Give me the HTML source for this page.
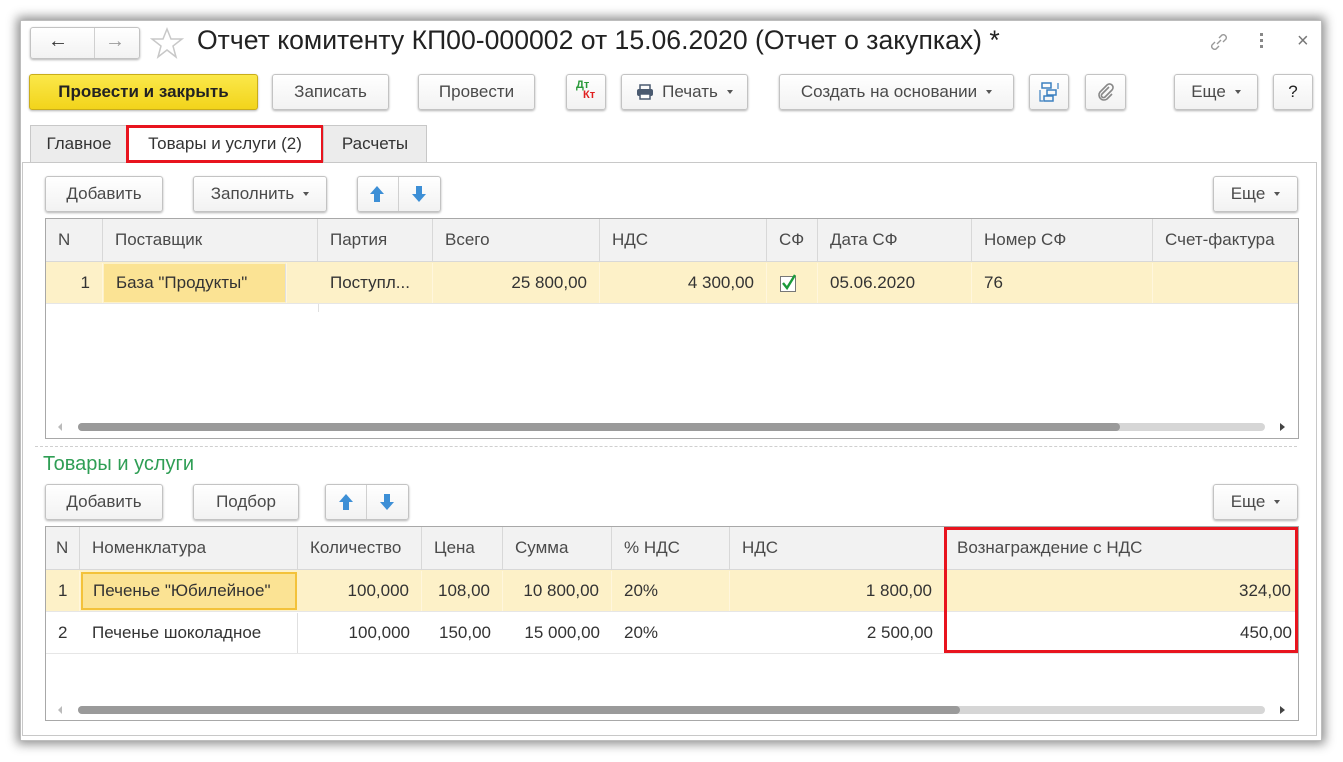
<!DOCTYPE html>
<html><head><meta charset="utf-8"><style>
*{box-sizing:border-box;margin:0;padding:0}
body{width:1343px;height:762px;background:#fff;position:relative;overflow:hidden;font-family:"Liberation Sans",Arial,sans-serif;color:#404040;font-size:17px}
.a{position:absolute}
.win{left:20px;top:20px;width:1302px;height:721px;background:#fff;border:1px solid #bdbdbd;box-shadow:0 0 10px 3px rgba(0,0,0,.45)}
.btn{position:absolute;height:36px;border:1px solid #c3c3c3;border-radius:3px;background:linear-gradient(#fff,#f2f2f2);box-shadow:0 1px 2px rgba(0,0,0,.3);display:flex;align-items:center;justify-content:center;color:#4a4a4a;font-size:17px;white-space:nowrap}
.dd:after{content:"";display:inline-block;margin-left:9px;border-left:3.5px solid transparent;border-right:3.5px solid transparent;border-top:4px solid #555;vertical-align:middle}
.tab{position:absolute;top:125px;height:38px;background:#ececec;border:1px solid #c8c8c8;display:flex;align-items:center;justify-content:center;color:#333}
.tbl{position:absolute;border:1px solid #a8a8a8;background:#fff}
.c{position:absolute;display:flex;align-items:center;padding:0 12px;white-space:nowrap;border-right:1px solid #e0e0e0}
.h{background:#f2f2f2;color:#4a4a4a;border-right:1px solid #d8d8d8;border-bottom:1px solid #d8d8d8}
.y{background:#fdf1c8;border-right:1px solid #fff6dd}
.r{justify-content:flex-end}
.sb{position:absolute;height:8px;border-radius:4px;background:#d6d6d6}
.th{position:absolute;height:8px;border-radius:4px;background:#9a9a9a}
</style></head><body>
<div class="a win"></div>
<div class="btn" style="left:30px;top:27px;width:110px;height:32px;padding:0"></div>
<div class="a" style="left:94px;top:28px;width:1px;height:30px;background:#d0d0d0"></div>
<div class="a" style="left:48px;top:30px;font-size:20px;color:#333;font-weight:bold">&#8592;</div>
<div class="a" style="left:105px;top:30px;font-size:20px;color:#9a9a9a;font-weight:bold">&#8594;</div>
<svg class="a" style="left:150px;top:26px" width="34" height="34" viewBox="0 0 34 34"><polygon points="17,3 21,13 32,13 23,20 26,31 17,24 8,31 11,20 2,13 13,13" fill="none" stroke="#c8c8c8" stroke-width="1.5"/></svg>
<div class="a" style="left:197px;top:25px;font-size:26.6px;color:#222;white-space:nowrap">Отчет комитенту КП00-000002 от 15.06.2020 (Отчет о закупках) *</div>
<svg class="a" style="left:1207px;top:30px" width="24" height="24" viewBox="0 0 24 24"><path d="M10 14 L14 10 M8 12 l-3 3 a3 3 0 0 0 4 4 l3-3 M16 12 l3-3 a3 3 0 0 0-4-4 l-3 3" fill="none" stroke="#999" stroke-width="1.4"/></svg>
<div class="a" style="left:1260px;top:33px;width:3px;height:3px;background:#888;box-shadow:0 6px #888,0 12px #888"></div>
<div class="a" style="left:1297px;top:30px;font-size:20px;color:#777">×</div>
<div class="btn" style="left:29px;top:74px;width:229px;background:linear-gradient(#fbe84a,#f2d41b);border-color:#c9ad1a;font-weight:bold;color:#222">Провести и закрыть</div>
<div class="btn" style="left:272px;top:74px;width:117px">Записать</div>
<div class="btn" style="left:418px;top:74px;width:117px">Провести</div>
<div class="btn" style="left:566px;top:74px;width:40px;display:block"><span class="a" style="left:9px;top:4px;font-size:11px;color:#2a9a3a;font-weight:bold">Дт</span><span class="a" style="left:16px;top:14px;font-size:11px;color:#e02020;font-weight:bold">Кт</span></div>
<div class="btn dd" style="left:621px;top:74px;width:127px"><svg width="18" height="16" viewBox="0 0 18 16" style="margin-right:8px"><rect x="4" y="1" width="10" height="5" fill="none" stroke="#4a5a70" stroke-width="1.5"/><rect x="1" y="5" width="16" height="7" rx="2" fill="#4a5a70"/><rect x="4" y="10" width="10" height="5" fill="#fff" stroke="#4a5a70" stroke-width="1.5"/></svg>Печать</div>
<div class="btn dd" style="left:779px;top:74px;width:235px">Создать на основании</div>
<div class="btn" style="left:1029px;top:74px;width:40px"><svg width="20" height="22" viewBox="0 0 20 22"><rect x="3" y="2" width="9" height="5" fill="none" stroke="#3c80c0" stroke-width="1.5"/><rect x="8" y="9" width="9" height="5" fill="none" stroke="#3c80c0" stroke-width="1.5"/><rect x="5" y="15" width="9" height="5" fill="none" stroke="#3c80c0" stroke-width="1.5"/><path d="M1 9 v11 h3 M19 2 v6" stroke="#3c80c0" stroke-width="1.2" fill="none"/></svg></div>
<div class="btn" style="left:1085px;top:74px;width:41px"><svg width="20" height="20" viewBox="0 0 20 20"><path d="M13 5 L6 12 a2 2 0 0 0 3 3 L16 8 a3.5 3.5 0 0 0-5-5 L4 10 a5 5 0 0 0 7 7 l5-5" fill="none" stroke="#888" stroke-width="1.6"/></svg></div>
<div class="btn dd" style="left:1174px;top:74px;width:84px">Еще</div>
<div class="btn" style="left:1273px;top:74px;width:40px;color:#222">?</div>
<div class="a" style="left:22px;top:162px;width:1295px;height:574px;border:1px solid #c8c8c8;background:#fff"></div>
<div class="tab" style="left:30px;width:98px">Главное</div>
<div class="tab" style="left:126px;width:198px;background:#fff;border:3px solid #e8141e;color:#333">Товары и услуги (2)</div>
<div class="tab" style="left:323px;width:104px">Расчеты</div>
<div class="btn" style="left:45px;top:176px;width:118px">Добавить</div>
<div class="btn dd" style="left:193px;top:176px;width:134px">Заполнить</div>
<div class="btn" style="left:357px;top:176px;width:84px"></div>
<div class="a" style="left:398px;top:177px;width:1px;height:34px;background:#d0d0d0"></div>
<svg class="a" style="left:368px;top:185px" width="18" height="18" viewBox="0 0 18 18"><path d="M9 1 L16 9 H12 V17 H6 V9 H2Z" fill="#3d8fd6"/></svg>
<svg class="a" style="left:410px;top:185px" width="18" height="18" viewBox="0 0 18 18"><path d="M9 17 L16 9 H12 V1 H6 V9 H2Z" fill="#3d8fd6"/></svg>
<div class="btn dd" style="left:1213px;top:176px;width:85px">Еще</div>
<div class="tbl" style="left:45px;top:218px;width:1254px;height:221px"></div>
<div class="c h" style="left:46px;top:219px;width:57px;height:43px">N</div>
<div class="c h" style="left:103px;top:219px;width:215px;height:43px">Поставщик</div>
<div class="c h" style="left:318px;top:219px;width:115px;height:43px">Партия</div>
<div class="c h" style="left:433px;top:219px;width:167px;height:43px">Всего</div>
<div class="c h" style="left:600px;top:219px;width:167px;height:43px">НДС</div>
<div class="c h" style="left:767px;top:219px;width:51px;height:43px">СФ</div>
<div class="c h" style="left:818px;top:219px;width:154px;height:43px">Дата СФ</div>
<div class="c h" style="left:972px;top:219px;width:181px;height:43px">Номер СФ</div>
<div class="c h" style="left:1153px;top:219px;width:145px;height:43px;border-right:0">Счет-фактура</div>
<div class="a" style="left:46px;top:262px;width:1252px;height:42px;background:#fdf1c8;border-bottom:1px solid #e6e6e6"></div>
<div class="c y r" style="left:46px;top:263px;width:57px;height:40px;color:#333">1</div>
<div class="c" style="left:104px;top:264px;width:182px;height:38px;background:#fbe394;color:#333">База "Продукты"</div>
<div class="a" style="left:286px;top:263px;width:1px;height:40px;background:#fff6dd"></div>
<div class="c y" style="left:318px;top:263px;width:115px;height:40px;color:#333">Поступл...</div>
<div class="c y r" style="left:433px;top:263px;width:167px;height:40px;color:#333">25 800,00</div>
<div class="c y r" style="left:600px;top:263px;width:167px;height:40px;color:#333">4 300,00</div>
<div class="c y" style="left:767px;top:263px;width:51px;height:40px"><svg width="20" height="20" viewBox="0 0 20 20"><rect x="1.5" y="3.5" width="15" height="15" fill="#fff" stroke="#777"/><path d="M4 10 L8 15 L16 2" fill="none" stroke="#1a9a3a" stroke-width="2.4"/></svg></div>
<div class="c y" style="left:818px;top:263px;width:154px;height:40px;color:#333">05.06.2020</div>
<div class="c y" style="left:972px;top:263px;width:181px;height:40px;color:#333">76</div>
<div class="a" style="left:318px;top:304px;width:1px;height:8px;background:#e0e0e0"></div>
<div class="a" style="left:58px;top:423px;border-top:4px solid transparent;border-bottom:4px solid transparent;border-right:4px solid #bbb"></div>
<div class="sb" style="left:78px;top:423px;width:1187px"></div>
<div class="th" style="left:78px;top:423px;width:1042px"></div>
<div class="a" style="left:1280px;top:423px;border-top:4px solid transparent;border-bottom:4px solid transparent;border-left:5px solid #444"></div>
<div class="a" style="left:35px;top:446px;width:1262px;border-top:1px dashed #cfcfcf"></div>
<div class="a" style="left:43px;top:453px;font-size:20px;color:#2f9e55">Товары и услуги</div>
<div class="btn" style="left:45px;top:484px;width:118px">Добавить</div>
<div class="btn" style="left:193px;top:484px;width:106px">Подбор</div>
<div class="btn" style="left:325px;top:484px;width:84px"></div>
<div class="a" style="left:366px;top:485px;width:1px;height:34px;background:#d0d0d0"></div>
<svg class="a" style="left:337px;top:493px" width="18" height="18" viewBox="0 0 18 18"><path d="M9 1 L16 9 H12 V17 H6 V9 H2Z" fill="#3d8fd6"/></svg>
<svg class="a" style="left:378px;top:493px" width="18" height="18" viewBox="0 0 18 18"><path d="M9 17 L16 9 H12 V1 H6 V9 H2Z" fill="#3d8fd6"/></svg>
<div class="btn dd" style="left:1213px;top:484px;width:85px">Еще</div>
<div class="tbl" style="left:45px;top:526px;width:1254px;height:195px"></div>
<div class="c h" style="left:46px;top:527px;width:34px;height:43px;padding:0 10px">N</div>
<div class="c h" style="left:80px;top:527px;width:218px;height:43px">Номенклатура</div>
<div class="c h" style="left:298px;top:527px;width:124px;height:43px">Количество</div>
<div class="c h" style="left:422px;top:527px;width:81px;height:43px">Цена</div>
<div class="c h" style="left:503px;top:527px;width:109px;height:43px">Сумма</div>
<div class="c h" style="left:612px;top:527px;width:118px;height:43px">% НДС</div>
<div class="c h" style="left:730px;top:527px;width:215px;height:43px">НДС</div>
<div class="c h" style="left:945px;top:527px;width:353px;height:43px;border-right:0">Вознаграждение с НДС</div>
<div class="a" style="left:46px;top:570px;width:1252px;height:42px;background:#fdf1c8;border-bottom:1px solid #e6e6e6"></div>
<div class="c y" style="left:46px;top:571px;width:34px;height:40px;padding:0 12px;color:#333">1</div>
<div class="c" style="left:81px;top:572px;width:216px;height:38px;background:#fbe394;border:2px solid #f3c23a;padding:0 10px;color:#333">Печенье "Юбилейное"</div>
<div class="c y r" style="left:298px;top:571px;width:124px;height:40px;color:#333">100,000</div>
<div class="c y r" style="left:422px;top:571px;width:81px;height:40px;color:#333">108,00</div>
<div class="c y r" style="left:503px;top:571px;width:109px;height:40px;color:#333">10 800,00</div>
<div class="c y" style="left:612px;top:571px;width:118px;height:40px;color:#333">20%</div>
<div class="c y r" style="left:730px;top:571px;width:215px;height:40px;color:#333">1 800,00</div>
<div class="c y r" style="left:945px;top:571px;width:353px;height:40px;padding-right:6px;color:#333">324,00</div>
<div class="a" style="left:46px;top:653px;width:1252px;height:1px;background:#e6e6e6"></div>
<div class="c" style="left:46px;top:613px;width:34px;height:40px;border:0;color:#333">2</div>
<div class="c" style="left:80px;top:613px;width:218px;height:40px;color:#333">Печенье шоколадное</div>
<div class="c r" style="left:298px;top:613px;width:124px;height:40px;border:0;color:#333">100,000</div>
<div class="c r" style="left:422px;top:613px;width:81px;height:40px;border:0;color:#333">150,00</div>
<div class="c r" style="left:503px;top:613px;width:109px;height:40px;border:0;color:#333">15 000,00</div>
<div class="c" style="left:612px;top:613px;width:118px;height:40px;border:0;color:#333">20%</div>
<div class="c r" style="left:730px;top:613px;width:215px;height:40px;border:0;color:#333">2 500,00</div>
<div class="c r" style="left:945px;top:613px;width:353px;height:40px;border:0;padding-right:6px;color:#333">450,00</div>
<div class="a" style="left:944px;top:527px;width:354px;height:126px;border:3px solid #e8141e"></div>
<div class="a" style="left:58px;top:706px;border-top:4px solid transparent;border-bottom:4px solid transparent;border-right:4px solid #bbb"></div>
<div class="sb" style="left:78px;top:706px;width:1187px"></div>
<div class="th" style="left:78px;top:706px;width:882px"></div>
<div class="a" style="left:1280px;top:706px;border-top:4px solid transparent;border-bottom:4px solid transparent;border-left:5px solid #444"></div>
</body></html>
